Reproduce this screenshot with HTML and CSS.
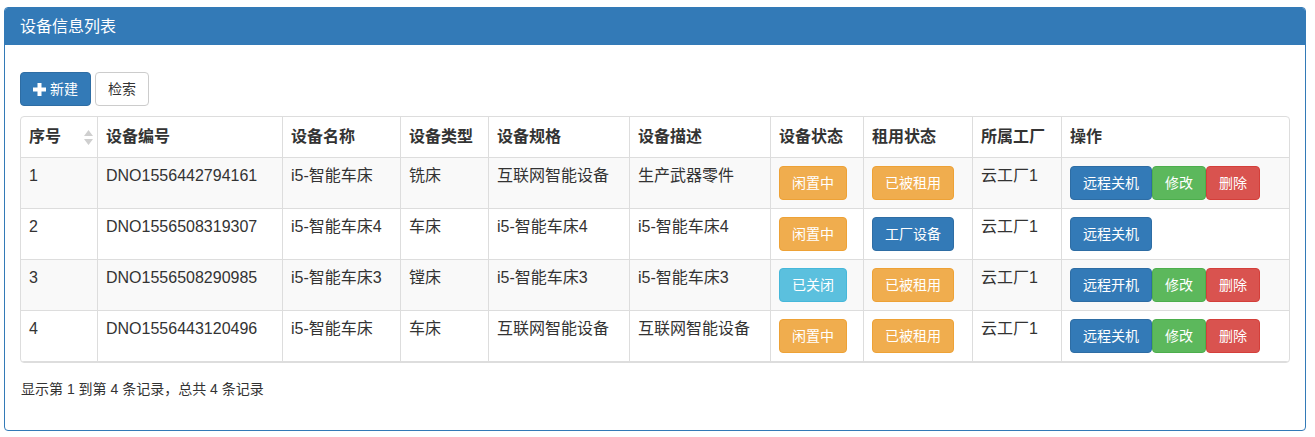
FILE: index.html
```html
<!DOCTYPE html>
<html lang="zh-CN">
<head>
<meta charset="utf-8">
<title>设备信息列表</title>
<link rel="stylesheet" href="styles.css">
</head>
<body>
<div class="panel">
  <div class="panel-heading">设备信息列表</div>
  <div class="panel-body">
    <div class="toolbar">
      <button class="btn btn-primary"><svg class="icon-plus" width="13" height="13" viewBox="0 0 13 13"><path d="M4.5 0h4v4.5h4.5v4h-4.5v4.5h-4v-4.5h-4.5v-4h4.5z" fill="#fff"/></svg>新建</button>
      <button class="btn btn-default">检索</button>
    </div>
    <div class="table-container">
      <table class="table">
        <thead>
          <tr>
            <th class="c1"><div class="th-inner sortable">序号<svg class="sort-icon" width="9" height="15" viewBox="0 0 9 15"><path d="M4.5 0L9 6H0z M4.5 15L0 9h9z" fill="#cfcfcf"/></svg></div></th>
            <th class="c2"><div class="th-inner">设备编号</div></th>
            <th class="c3"><div class="th-inner">设备名称</div></th>
            <th class="c4"><div class="th-inner">设备类型</div></th>
            <th class="c5"><div class="th-inner">设备规格</div></th>
            <th class="c6"><div class="th-inner">设备描述</div></th>
            <th class="c7"><div class="th-inner">设备状态</div></th>
            <th class="c8"><div class="th-inner">租用状态</div></th>
            <th class="c9"><div class="th-inner">所属工厂</div></th>
            <th class="c10"><div class="th-inner">操作</div></th>
          </tr>
        </thead>
        <tbody>
          <tr class="odd">
            <td>1</td>
            <td>DNO1556442794161</td>
            <td>i5-智能车床</td>
            <td>铣床</td>
            <td>互联网智能设备</td>
            <td>生产武器零件</td>
            <td><span class="btn btn-warning">闲置中</span></td>
            <td><span class="btn btn-warning">已被租用</span></td>
            <td>云工厂1</td>
            <td><div class="btn-row"><span class="btn btn-primary">远程关机</span><span class="btn btn-success">修改</span><span class="btn btn-danger">删除</span></div></td>
          </tr>
          <tr>
            <td>2</td>
            <td>DNO1556508319307</td>
            <td>i5-智能车床4</td>
            <td>车床</td>
            <td>i5-智能车床4</td>
            <td>i5-智能车床4</td>
            <td><span class="btn btn-warning">闲置中</span></td>
            <td><span class="btn btn-primary">工厂设备</span></td>
            <td>云工厂1</td>
            <td><div class="btn-row"><span class="btn btn-primary">远程关机</span></div></td>
          </tr>
          <tr class="odd">
            <td>3</td>
            <td>DNO1556508290985</td>
            <td>i5-智能车床3</td>
            <td>镗床</td>
            <td>i5-智能车床3</td>
            <td>i5-智能车床3</td>
            <td><span class="btn btn-info">已关闭</span></td>
            <td><span class="btn btn-warning">已被租用</span></td>
            <td>云工厂1</td>
            <td><div class="btn-row"><span class="btn btn-primary">远程开机</span><span class="btn btn-success">修改</span><span class="btn btn-danger">删除</span></div></td>
          </tr>
          <tr>
            <td>4</td>
            <td>DNO1556443120496</td>
            <td>i5-智能车床</td>
            <td>车床</td>
            <td>互联网智能设备</td>
            <td>互联网智能设备</td>
            <td><span class="btn btn-warning">闲置中</span></td>
            <td><span class="btn btn-warning">已被租用</span></td>
            <td>云工厂1</td>
            <td><div class="btn-row"><span class="btn btn-primary">远程关机</span><span class="btn btn-success">修改</span><span class="btn btn-danger">删除</span></div></td>
          </tr>
        </tbody>
      </table>
    </div>
    <div class="pagination-detail">显示第 1 到第 4 条记录，总共 4 条记录</div>
  </div>
</div>
</body>
</html>
```

FILE: styles.css
```css
* { box-sizing: border-box; }

html, body {
  margin: 0;
  padding: 0;
  background: #fff;
}

body {
  font-family: "Liberation Sans", "Noto Sans CJK SC", sans-serif;
  font-size: 14px;
  line-height: 20px;
  color: #333;
}

.panel {
  margin: 7px 9px 6px 4px;
  border: 1px solid #337ab7;
  border-radius: 4px;
  background: #fff;
}

.panel-heading {
  background: #337ab7;
  color: #fff;
  font-size: 16px;
  line-height: 17px;
  padding: 10px 15px;
  border-radius: 3px 3px 0 0;
}

.panel-body {
  padding: 15px;
}

.toolbar {
  display: flex;
  gap: 4px;
  padding-top: 12px;
  margin-bottom: 10px;
}

.btn {
  display: inline-flex;
  align-items: center;
  height: 34px;
  padding: 6px 12px;
  font-family: inherit;
  font-size: 14px;
  line-height: 20px;
  border: 1px solid transparent;
  border-radius: 4px;
  white-space: nowrap;
  cursor: pointer;
}

.btn-default { background: #fff; color: #333; border-color: #ccc; }
.btn-primary { background: #337ab7; color: #fff; border-color: #2e6da4; }
.btn-warning { background: #f0ad4e; color: #fff; border-color: #eea236; }
.btn-info { background: #5bc0de; color: #fff; border-color: #46b8da; }
.btn-success { background: #5cb85c; color: #fff; border-color: #4cae4c; }
.btn-danger { background: #d9534f; color: #fff; border-color: #d43f3a; }

.icon-plus {
  margin-right: 4px;
  flex: none;
}

.table-container {
  border: 1px solid #ddd;
  border-radius: 4px;
  overflow: hidden;
}

.table {
  width: 100%;
  table-layout: fixed;
  border-collapse: separate;
  border-spacing: 0;
  font-size: 16px;
}

.table th, .table td {
  border-left: 1px solid #ddd;
  text-align: left;
  white-space: nowrap;
}

.table th:first-child, .table td:first-child {
  border-left: none;
}

.table th {
  padding: 0;
  font-weight: bold;
}

.th-inner {
  padding: 8px;
  line-height: 24px;
}

.th-inner.sortable {
  display: flex;
  align-items: center;
  justify-content: space-between;
  padding-right: 4px;
}

.sort-icon { flex: none; }

.table td {
  padding: 8px;
  line-height: 20px;
  height: 51px;
  vertical-align: top;
  border-top: 1px solid #ddd;
}

.table tbody tr:last-child td {
  border-bottom: 1px solid #ddd;
}

.table tbody tr.odd td {
  background: #f9f9f9;
}

.c1 { width: 76px; }
.c2 { width: 185px; }
.c3 { width: 118px; }
.c4 { width: 88px; }
.c5 { width: 141px; }
.c6 { width: 141px; }
.c7 { width: 93px; }
.c8 { width: 109px; }
.c9 { width: 89px; }
.c10 { width: 228px; }

.btn-row {
  display: flex;
}

.pagination-detail {
  margin-top: 9px;
  margin-bottom: 9px;
  padding-left: 1px;
  font-size: 14px;
  line-height: 34px;
}
```
